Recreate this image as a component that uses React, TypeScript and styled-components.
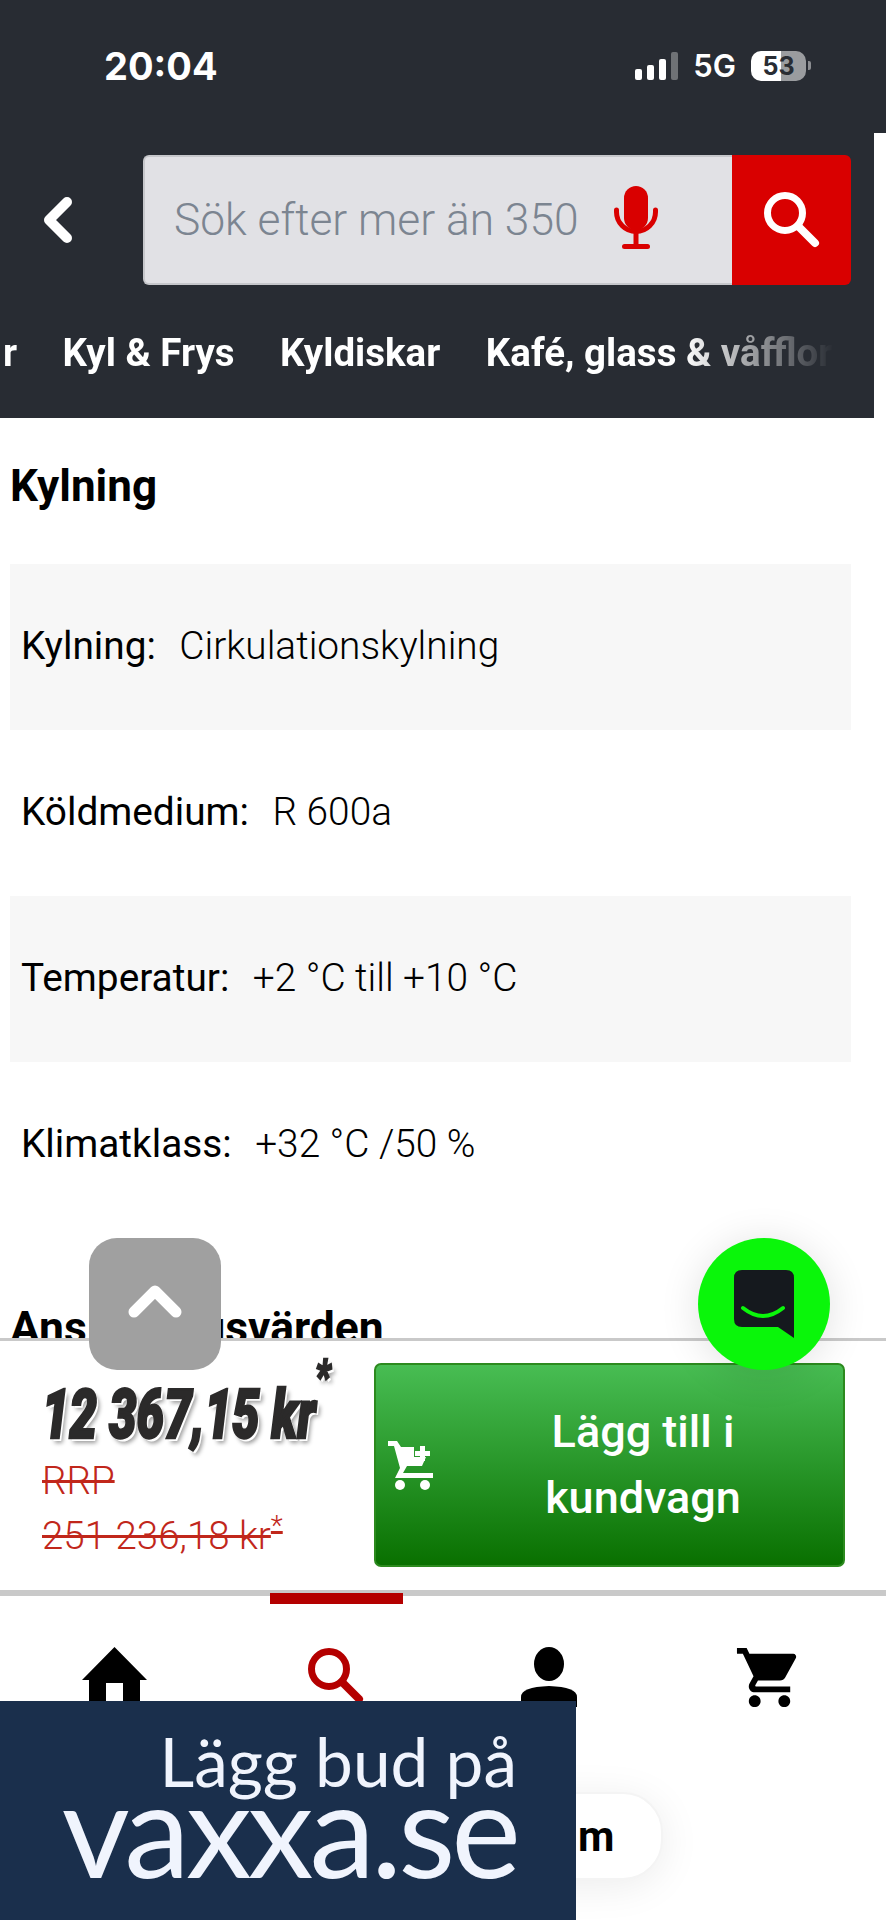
import styled, { createGlobalStyle } from "styled-components";
import { MdShoppingCart } from "react-icons/md";

const GlobalStyle = createGlobalStyle`
  html, body {
    margin: 0;
    padding: 0;
    background: #fff;
  }
  * {
    box-sizing: border-box;
  }
`

const Page = styled.div`
  position: relative;
  width: 886px;
  height: 1920px;
  overflow: hidden;
  display: flex;
  flex-direction: column;
  background: #fff;
  font-family: Roboto, "Liberation Sans", sans-serif;
  color: #000;
`

const StatusBar = styled.div`
  height: 133px;
  flex: none;
  background: #282c33;
  display: flex;
  justify-content: space-between;
  align-items: center;
  padding: 0 75px 0 104px;
  color: #fff;
`

const Clock = styled.div`
  font-family: Inter, sans-serif;
  font-size: 38px;
  font-weight: 700;
  margin-top: -2px;
`

const StatusIcons = styled.div`
  display: flex;
  align-items: center;
  gap: 15px;
  margin-top: -2px;
`

const Signal = styled.div`
  display: flex;
  align-items: flex-end;
  gap: 5px;
  height: 28px;
`

const SignalBar = styled.span<{ $h: number; $dim?: boolean }>`
  width: 7px;
  height: ${p => p.$h}px;
  border-radius: 2px;
  background: ${p => (p.$dim ? "#6f7276" : "#fff")};
`

const Network = styled.div`
  font-family: Inter, sans-serif;
  font-size: 31px;
  font-weight: 600;
`

const Battery = styled.div`
  width: 55px;
  height: 30px;
  border-radius: 10px;
  overflow: hidden;
  background: linear-gradient(to right, #fff 0 55%, #9a9c9f 55% 100%);
  color: #282c33;
  font-family: Inter, sans-serif;
  font-size: 25px;
  font-weight: 700;
  line-height: 30px;
  text-align: center;
`

const BatteryWrap = styled.div`
  display: flex;
  align-items: center;
  gap: 2px;

  &::after {
    content: "";
    width: 3px;
    height: 9px;
    border-radius: 0 2px 2px 0;
    background: #8b8d91;
  }
`

const HeaderBlock = styled.div`
  width: 874px;
  height: 285px;
  flex: none;
  background: #282c33;
  display: flex;
  flex-direction: column;
`

const SearchRow = styled.div`
  display: flex;
  align-items: center;
  height: 130px;
  margin-top: 22px;
  padding-left: 40px;
`

const BackIcon = styled.svg`
  width: 36px;
  height: 46px;
  margin-right: 67px;
  flex: none;
`

const SearchField = styled.div`
  width: 589px;
  height: 130px;
  display: flex;
  align-items: center;
  justify-content: space-between;
  padding: 0 74px 0 29px;
  background: #e1e1e5;
  border: 2px solid #c6c7cb;
  border-right: none;
  border-radius: 6px 0 0 6px;
  color: #7c8591;
  font-size: 44.3px;
  font-weight: 300;
`

const MicIcon = styled.svg`
  width: 44px;
  height: 63px;
  flex: none;
  margin-bottom: 5px;
`

const SearchButton = styled.div`
  width: 119px;
  height: 130px;
  display: flex;
  align-items: center;
  justify-content: center;
  background: #d90000;
  border-radius: 0 6px 6px 0;
  color: #fff;
`

const CategoryRow = styled.div`
  display: flex;
  align-items: center;
  gap: 45.5px;
  height: 44px;
  margin-top: 45px;
  padding-left: 3px;
  width: 834px;
  overflow: hidden;
  white-space: nowrap;
  color: #fff;
  font-size: 38.5px;
  font-weight: 700;
  mask-image: linear-gradient(to right, #000 0 82%, transparent 100%);
`

const Content = styled.main`
  flex: 1;
  min-height: 0;
  overflow: hidden;
  padding: 0 35px 0 10px;
`

const SectionTitle = styled.h2`
  margin: 0;
  height: 146px;
  display: flex;
  align-items: center;
  font-size: 44px;
  font-weight: 700;
  padding-bottom: 10px;
`

const SpecRow = styled.div<{ $shaded?: boolean }>`
  height: 166px;
  display: flex;
  align-items: center;
  gap: 23.5px;
  padding-left: 11px;
  padding-bottom: 4px;
  font-size: 38.8px;
  background: ${p => (p.$shaded ? "#f7f7f7" : "#fff")};
`

const SpecLabel = styled.span`
  font-weight: 400;
`

const SpecValue = styled.span`
  font-weight: 300;
`

const NextTitle = styled.h2`
  margin: 78px 0 0;
  font-size: 44.4px;
  line-height: 44px;
  font-weight: 700;
  white-space: nowrap;
`

const BuyBar = styled.section`
  height: 258px;
  flex: none;
  display: flex;
  padding: 22px 41px 23px 42px;
  background: #fff;
  border-top: 3px solid #c9c9c9;
  border-bottom: 6px solid #c9c9c9;
`

const PriceCol = styled.div`
  width: 332px;
  flex: none;
  display: flex;
  flex-direction: column;
`

const Price = styled.div`
  position: relative;
  margin-top: 14px;
  width: fit-content;
  font-size: 68px;
  line-height: 76px;
  font-weight: 900;
  font-style: italic;
  color: #2b2a2a;
  white-space: nowrap;
  -webkit-text-stroke: 2.5px #2b2a2a;
  transform: scaleX(0.72);
  transform-origin: left center;
  text-shadow: 3px 3px 0 #fff, 5px 5px 5px rgba(0, 0, 0, 0.4);
`

const PriceStar = styled.span`
  position: absolute;
  left: 100%;
  top: -24px;
  font-size: 46px;
  line-height: 1;
`

const OldPrice = styled.div`
  font-size: 38.5px;
  font-weight: 300;
  line-height: 55px;
  color: #c1271b;
  text-decoration: line-through;
  white-space: nowrap;
`

const OldStar = styled.sup`
  font-size: 28px;
  line-height: 0;
`

const CartButton = styled.div`
  flex: 1;
  display: flex;
  align-items: center;
  padding-left: 12px;
  color: #fff;
  background: linear-gradient(to bottom, #48bd53, #097000);
  border: 2px solid #2c8a1e;
  border-radius: 7px;
`

const CartLabel = styled.div`
  flex: 1;
  text-align: center;
  padding-left: 9px;
  font-size: 45px;
  font-weight: 500;
  line-height: 66px;
`

const TabBar = styled.nav`
  position: relative;
  height: 324px;
  flex: none;
  display: grid;
  grid-template-columns: 229px 214px 211px 230px;
  align-items: start;
`

const Tab = styled.div<{ $active?: boolean; $top: number }>`
  display: flex;
  justify-content: center;
  padding-top: ${p => p.$top}px;
  color: ${p => (p.$active ? "#b40000" : "#000")};
`

const TabIndicator = styled.div`
  position: absolute;
  left: 270px;
  top: -3px;
  width: 133px;
  height: 11px;
  background: #b40000;
`

const ScrollTop = styled.div`
  position: absolute;
  left: 89px;
  top: 1238px;
  width: 132px;
  height: 132px;
  display: flex;
  align-items: center;
  justify-content: center;
  padding-bottom: 6px;
  border-radius: 28px;
  background: #a0a0a0;
`

const ChatBubble = styled.div`
  position: absolute;
  left: 698px;
  top: 1238px;
  width: 132px;
  height: 132px;
  display: flex;
  align-items: center;
  justify-content: center;
  border-radius: 50%;
  background: #0af60a;
  box-shadow: 0 4px 40px rgba(0, 0, 0, 0.12);
`

const Pill = styled.div`
  position: absolute;
  left: 470px;
  top: 1792px;
  width: 193px;
  height: 88px;
  display: flex;
  align-items: center;
  padding-left: 106px;
  border: 2px solid #f4f4f4;
  border-radius: 40px;
  background: #fff;
  box-shadow: 0 6px 40px rgba(0, 0, 0, 0.08);
  font-size: 42px;
  font-weight: 700;
`

const Banner = styled.div`
  position: absolute;
  left: 0;
  bottom: 0;
  width: 576px;
  height: 219px;
  display: flex;
  flex-direction: column;
  align-items: flex-end;
  padding: 22px 59px 0 0;
  background: #1a2f4c;
  color: #f0f4fd;
  font-family: Lato, sans-serif;
  white-space: nowrap;
`

const BannerLine = styled.div`
  font-size: 67.5px;
  line-height: 76px;
  font-weight: 400;
`

const BannerBrand = styled.div`
  margin-top: -27px;
  font-size: 132px;
  line-height: 110px;
  font-weight: 400;
  letter-spacing: -4px;
`

const categories = ["r", "Kyl & Frys", "Kyldiskar", "Kafé, glass & våfflor"];

const specs = [
    { label: "Kylning:", value: "Cirkulationskylning" },
    { label: "Köldmedium:", value: "R 600a" },
    { label: "Temperatur:", value: "+2 °C till +10 °C" },
    { label: "Klimatklass:", value: "+32 °C /50 %" },
];

const SearchGlyph = ({ size }: { size: number }) => (
    <svg width={size} height={size} viewBox="0 0 56 56" fill="none" stroke="currentColor">
        <circle cx="21" cy="21" r="17.5" strokeWidth="7"/>
        <path d="M34 34 L51 51" strokeWidth="8" strokeLinecap="round"/>
    </svg>
);

export default function App() {
    return (
        <Page>
            <GlobalStyle/>
            <StatusBar>
                <Clock>20:04</Clock>
                <StatusIcons>
                    <Signal>
                        <SignalBar $h={11}/>
                        <SignalBar $h={15}/>
                        <SignalBar $h={21}/>
                        <SignalBar $h={28} $dim/>
                    </Signal>
                    <Network>5G</Network>
                    <BatteryWrap>
                        <Battery>53</Battery>
                    </BatteryWrap>
                </StatusIcons>
            </StatusBar>
            <HeaderBlock>
                <SearchRow>
                    <BackIcon viewBox="0 0 36 46">
                        <path d="M27 5 L9 23 L27 41" fill="none" stroke="#fff" strokeWidth="10" strokeLinejoin="round" strokeLinecap="round"/>
                    </BackIcon>
                    <SearchField>
                        Sök efter mer än 350
                        <MicIcon viewBox="0 0 44 63">
                            <rect x="10" y="0" width="24" height="44" rx="12" fill="#d90000"/>
                            <path d="M2.5 24 V26 A19.5 19.5 0 0 0 41.5 26 V24" fill="none" stroke="#d90000" strokeWidth="5" strokeLinecap="round"/>
                            <path d="M22 45 V58" stroke="#d90000" strokeWidth="5"/>
                            <rect x="8" y="58" width="28" height="5" rx="2.5" fill="#d90000"/>
                        </MicIcon>
                    </SearchField>
                    <SearchButton>
                        <SearchGlyph size={56}/>
                    </SearchButton>
                </SearchRow>
                <CategoryRow>
                    {categories.map(c => <span key={c}>{c}</span>)}
                </CategoryRow>
            </HeaderBlock>
            <Content>
                <SectionTitle>Kylning</SectionTitle>
                {specs.map((s, i) => (
                    <SpecRow key={s.label} $shaded={i % 2 === 0}>
                        <SpecLabel>{s.label}</SpecLabel>
                        <SpecValue>{s.value}</SpecValue>
                    </SpecRow>
                ))}
                <NextTitle>Anslutningsvärden</NextTitle>
            </Content>
            <BuyBar>
                <PriceCol>
                    <Price>
                        12 367,15 kr
                        <PriceStar>*</PriceStar>
                    </Price>
                    <OldPrice>RRP</OldPrice>
                    <OldPrice>251 236,18 kr<OldStar>*</OldStar></OldPrice>
                </PriceCol>
                <CartButton>
                    <svg width="46" height="50" viewBox="0 0 46 50" fill="#fff">
                        <path d="M0 1 H9 L13 7 H26 V17 H38 L34 26 H19 L15 33 H45 V38 H7 L12 28 L6 6 H0 Z"/>
                        <circle cx="12" cy="45" r="5"/>
                        <circle cx="37" cy="45" r="5"/>
                        <path d="M32 6 H37 V11 H42 V16 H37 V21 H32 V16 H27 V11 H32 Z"/>
                    </svg>
                    <CartLabel>Lägg till i<br/>kundvagn</CartLabel>
                </CartButton>
            </BuyBar>
            <TabBar>
                <TabIndicator/>
                <Tab $top={51}>
                    <svg width="65" height="70" viewBox="0 0 65 70" fill="#000">
                        <path d="M32.5 0 L65 33 H58 V70 H41 V36 H24 V70 H7 V33 H0 Z"/>
                    </svg>
                </Tab>
                <Tab $active $top={52}><SearchGlyph size={56}/></Tab>
                <Tab $top={51}>
                    <svg width="56" height="60" viewBox="0 0 56 60" fill="#000">
                        <ellipse cx="28" cy="17" rx="15" ry="17"/>
                        <path d="M0 60 V50 Q0 40 28 39 Q56 40 56 50 V60 Z"/>
                    </svg>
                </Tab>
                <Tab $top={46}><MdShoppingCart size={71}/></Tab>
            </TabBar>
            <ScrollTop>
                <svg width="56" height="36" viewBox="0 0 56 36">
                    <path d="M7 29 L28 8 L49 29" fill="none" stroke="#fff" strokeWidth="11" strokeLinecap="round" strokeLinejoin="round"/>
                </svg>
            </ScrollTop>
            <ChatBubble>
                <svg width="60" height="68" viewBox="0 0 60 68">
                    <path d="M8 0 H52 Q60 0 60 8 V68 L44 57 H8 Q0 57 0 49 V8 Q0 0 8 0 Z" fill="#15191e"/>
                    <path d="M9 38 Q29 54 49 38" fill="none" stroke="#0af60a" strokeWidth="4" strokeLinecap="round"/>
                </svg>
            </ChatBubble>
            <Pill>m</Pill>
            <Banner>
                <BannerLine>Lägg bud på</BannerLine>
                <BannerBrand>vaxxa.se</BannerBrand>
            </Banner>
        </Page>
    );
}
